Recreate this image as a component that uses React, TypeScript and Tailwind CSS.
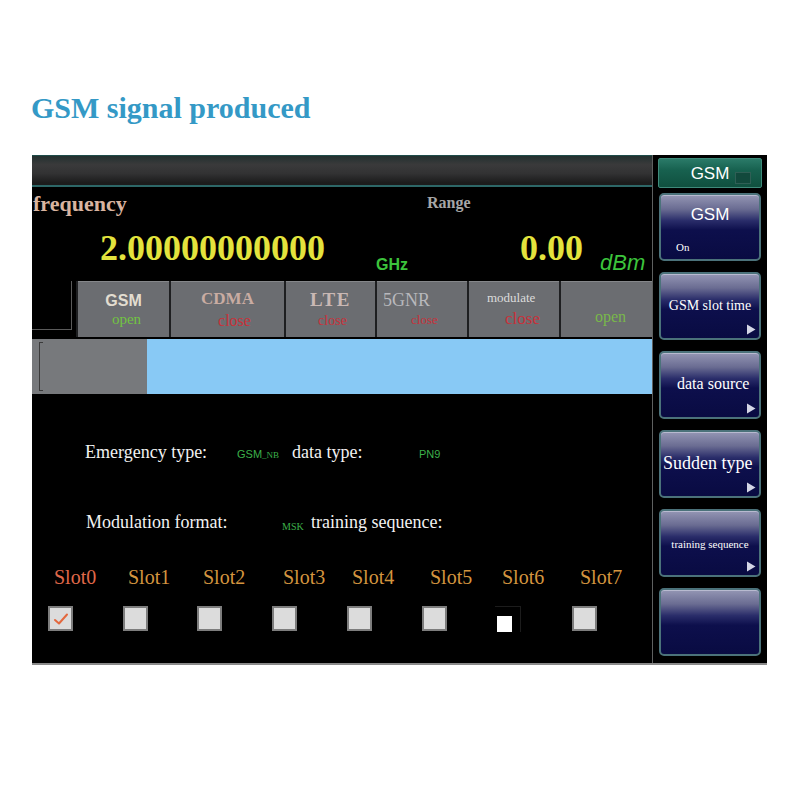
import React from "react";

const serif = "font-['Liberation_Serif','Times_New_Roman',serif]";
const sans = "font-['Liberation_Sans',Arial,sans-serif]";

function SideButton({ children, arrow = true }: { children?: React.ReactNode; arrow?: boolean }) {
  return (
    <div className="relative h-[68px] rounded-[5px] border-2 border-[#4b727a] bg-[linear-gradient(180deg,#9496b4_0%,#6a6c92_22%,#2a2d6a_40%,#0d0f4c_55%,#090b42_100%)] shadow-[inset_0_1px_0_#b8bad0]">
      {children}
      {arrow && (
        <svg className="absolute right-[3px] bottom-[3px]" width="10" height="11" viewBox="0 0 10 11">
          <polygon points="1,0.5 9.5,5.5 1,10.5" fill="#d4d6e6" />
        </svg>
      )}
    </div>
  );
}

function Tab({ w, children }: { w: string; children: React.ReactNode }) {
  return <div className={`${w} h-full bg-[#6b6d71] border-t border-[#85878a] relative`}>{children}</div>;
}

export default function App() {
  const slotLabelW = ["w-[74px]", "w-[75px]", "w-[80px]", "w-[69px]", "w-[78px]", "w-[72px]", "w-[78px]", "w-[60px]"];
  const boxW = ["w-[75px]", "w-[74px]", "w-[75px]", "w-[75px]", "w-[75px]", "w-[73px]", "w-[77px]", "w-[30px]"];
  return (
    <div className="w-[800px] h-[800px] bg-white overflow-hidden">
      <div className="h-[155px] pt-[93px] pl-[31px]">
        <div className={`${serif} text-[30px] leading-none font-bold text-[#3499c6]`}>GSM signal produced</div>
      </div>
      <div className="ml-[32px] w-[735px] h-[510px] bg-black flex border-b-2 border-[#8a8a8a]">
        {/* main */}
        <div className="w-[620px] flex flex-col">
          <div className="h-[32px] bg-[linear-gradient(180deg,#23302f_0%,#3a3a3b_30%,#323233_60%,#1c1c1c_92%)] border-b-2 border-[#2d6767] border-t border-t-[#1f4c4a]" />
          {/* header area */}
          <div className="h-[94px] flex flex-col">
            <div className="flex items-start pt-[6px] pl-[1px]">
              <div className={`${serif} w-[394px] text-[22px] leading-none font-bold text-[#d9b4a0]`}>frequency</div>
              <div className={`${serif} text-[16px] leading-none font-bold text-[#a6a6a6] mt-[2px]`}>Range</div>
            </div>
            <div className="flex items-start pt-[15px]">
              <div className="w-[344px] pl-[68px]">
                <div className={`${serif} text-[36px] leading-none font-bold text-[#e3e33d]`}>2.00000000000</div>
              </div>
              <div className={`w-[144px] mt-[27px] ${sans} text-[16px] leading-none font-bold text-[#3cc43c]`}>GHz</div>
              <div className={`w-[80px] ${serif} text-[36px] leading-none font-bold text-[#e3e33d]`}>0.00</div>
              <div className={`mt-[22px] ${sans} italic text-[22px] leading-none text-[#3cc43c]`}>dBm</div>
            </div>
          </div>
          {/* tabs */}
          <div className="h-[56px] flex gap-[2px] bg-[#1e1f21]">
            <div className="w-[44px] h-full bg-black flex">
              <div className="w-[40px] h-[49px] border-r border-b border-[#5a5a5a]" />
            </div>
            <Tab w="w-[91px]">
              <div className="flex flex-col items-center pt-[11px]">
                <div className={`${sans} text-[16px] leading-none font-bold text-[#e2ddd0]`}>GSM</div>
                <div className={`${serif} text-[15px] leading-none text-[#72c442] mt-[3px] ml-[6px]`}>open</div>
              </div>
            </Tab>
            <Tab w="w-[113px]">
              <div className="flex flex-col items-center pt-[8px]">
                <div className={`${serif} text-[17px] leading-none font-bold text-[#c9aca2]`}>CDMA</div>
                <div className={`${serif} text-[16px] leading-none text-[#c8313a] mt-[6px] ml-[14px]`}>close</div>
              </div>
            </Tab>
            <Tab w="w-[89px]">
              <div className="flex flex-col items-center pt-[8px]">
                <div className={`${serif} text-[19px] leading-none font-bold tracking-[1.5px] text-[#c9b8b4]`}>LTE</div>
                <div className={`${serif} text-[14px] leading-none text-[#c8313a] mt-[5px] ml-[4px]`}>close</div>
              </div>
            </Tab>
            <Tab w="w-[90px]">
              <div className="flex flex-col pt-[9px] pl-[6px]">
                <div className={`${serif} text-[18px] leading-none text-[#b8b8bc]`}>5GNR</div>
                <div className={`${serif} text-[13px] leading-none text-[#c8313a] mt-[4px] ml-[28px]`}>close</div>
              </div>
            </Tab>
            <Tab w="w-[90px]">
              <div className="flex flex-col pt-[9px] pl-[18px]">
                <div className={`${serif} text-[13px] leading-none text-[#dcdcdc]`}>modulate</div>
                <div className={`${serif} text-[17px] leading-none text-[#c8313a] mt-[6px] ml-[18px]`}>close</div>
              </div>
            </Tab>
            <Tab w="w-[91px]">
              <div className="pt-[27px] pl-[34px]">
                <div className={`${serif} text-[16px] leading-none text-[#79b84a]`}>open</div>
              </div>
            </Tab>
          </div>
          {/* blue bar */}
          <div className="h-[57px] pt-[2px] flex">
            <div className="w-[115px] h-full bg-[#77797c] pl-[7px] py-[3px]">
              <div className="w-[4px] h-full border-l border-t border-b border-[#3a3a3a]" />
            </div>
            <div className="flex-1 h-full bg-[#88c9f5]" />
          </div>
          {/* content */}
          <div className="flex-1 flex flex-col pt-[47px]">
            <div className="flex items-end pl-[53px] h-[20px]">
              <div className={`w-[152px] ${serif} text-[18px] leading-none text-[#f2f2f2]`}>Emergency type:</div>
              <div className={`w-[55px] ${sans} text-[11px] leading-none text-[#3cb04a] pb-[1px]`}>
                GSM<span className={`${serif} text-[9px]`}>_NB</span>
              </div>
              <div className={`w-[127px] ${serif} text-[18px] leading-none text-[#f2f2f2]`}>data type:</div>
              <div className={`${sans} text-[11px] leading-none text-[#3cb04a] pb-[1px]`}>PN9</div>
            </div>
            <div className="flex items-end pl-[54px] h-[20px] mt-[50px]">
              <div className={`w-[196px] ${serif} text-[18px] leading-none text-[#f2f2f2]`}>Modulation format:</div>
              <div className={`w-[29px] ${serif} text-[10px] leading-none text-[#3cb04a] mb-[-1px]`}>MSK</div>
              <div className={`${serif} text-[18px] leading-none text-[#f2f2f2]`}>training sequence:</div>
            </div>
            <div className="flex pl-[22px] mt-[36px]">
              {["Slot0", "Slot1", "Slot2", "Slot3", "Slot4", "Slot5", "Slot6", "Slot7"].map((s, i) => (
                <div
                  key={s}
                  className={`${slotLabelW[i]} ${serif} text-[20px] leading-none ${i === 0 ? "text-[#e0694a]" : "text-[#d4953f]"}`}
                >
                  {s}
                </div>
              ))}
            </div>
            <div className="flex pl-[16px] mt-[19px] h-[25px]">
              {boxW.map((w, i) => (
                <div key={i} className={`${w} h-[25px]`}>
                  {i === 6 ? (
                    <div className="w-[26px] h-[26px] border-t border-r border-[#1c1c1c] pt-[9px] pl-[2px]">
                      <div className="w-[15px] h-[16px] bg-white" />
                    </div>
                  ) : (
                    <div className="w-[25px] h-[25px] border-2 border-[#7d7d7d] bg-[#dcdcdc] flex items-center justify-center">
                      {i === 0 && (
                        <svg width="16" height="14" viewBox="0 0 16 14">
                          <path d="M2 8 L6 11.5 L14 2.5" fill="none" stroke="#e3683e" strokeWidth="2" strokeLinecap="round" strokeLinejoin="round" />
                        </svg>
                      )}
                    </div>
                  )}
                </div>
              ))}
            </div>
          </div>
        </div>
        {/* divider */}
        <div className="w-px bg-[#5e6060]" />
        {/* sidebar */}
        <div className="w-[114px] flex flex-col pt-[3px] px-[6px] gap-[11px]">
          <div className="-mx-[1px] h-[30px] rounded-[2px] border border-[#3f8a7a] bg-[linear-gradient(180deg,#2a7a68_0%,#17614f_40%,#10503f_100%)] relative flex items-center justify-center">
            <div className={`${sans} text-[17px] leading-none text-white`}>GSM</div>
            <div className="absolute right-[10px] top-[13px] w-[16px] h-[12px] border border-[#2f5f55] bg-[#12493c]" />
          </div>
          <div className="-mt-[6px]">
            <SideButton arrow={false}>
              <div className={`${sans} text-[17px] leading-none text-white text-center pt-[11px]`}>GSM</div>
              <div className={`${serif} text-[11px] leading-none text-white pl-[15px] pt-[19px]`}>On</div>
            </SideButton>
          </div>
          <SideButton>
            <div className={`${serif} text-[14px] leading-none text-white text-center pt-[25px]`}>GSM slot time</div>
          </SideButton>
          <SideButton>
            <div className={`${serif} text-[16px] leading-none text-white pl-[16px] pt-[23px]`}>data source</div>
          </SideButton>
          <SideButton>
            <div className={`${serif} text-[18px] leading-none text-white pl-[2px] pt-[22px] whitespace-nowrap`}>Sudden type</div>
          </SideButton>
          <SideButton>
            <div className={`${serif} text-[11px] leading-none text-white text-center pt-[28px] whitespace-nowrap`}>training sequence</div>
          </SideButton>
          <SideButton arrow={false} />
        </div>
      </div>
    </div>
  );
}
